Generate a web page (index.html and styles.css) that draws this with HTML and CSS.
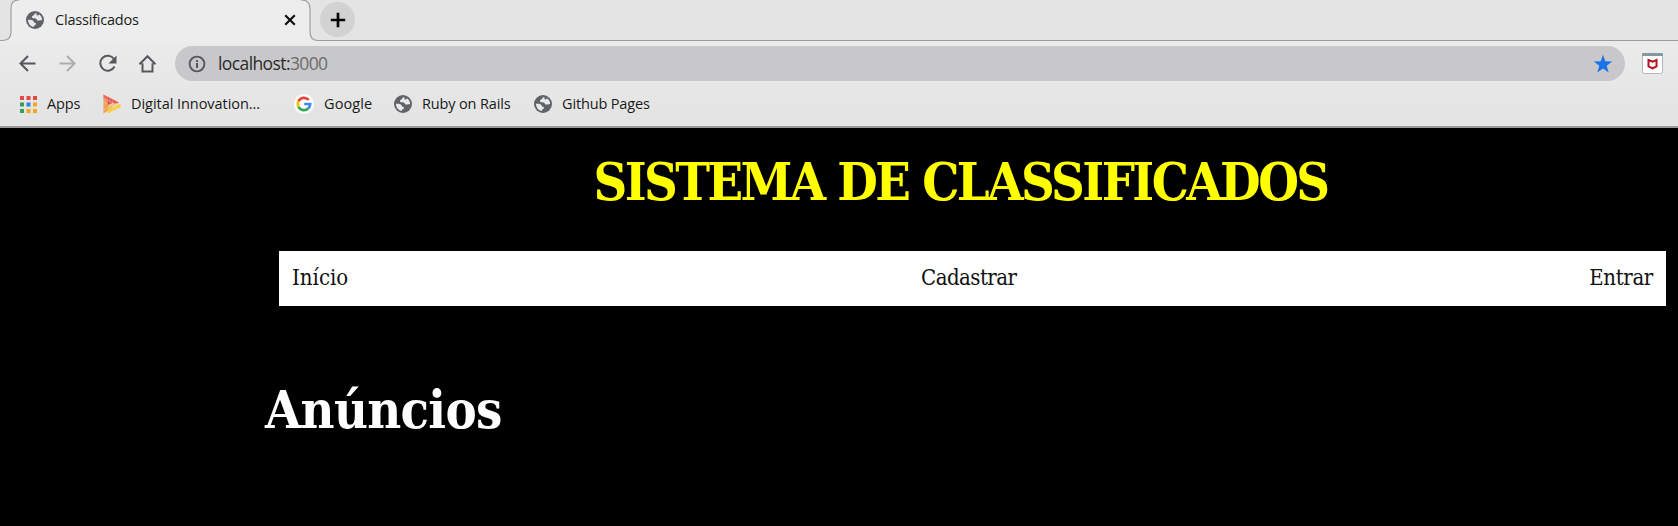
FILE: index.html
```html
<!DOCTYPE html>
<html lang="pt-BR">
<head>
<meta charset="utf-8">
<title>Classificados</title>
<link rel="stylesheet" href="styles.css">
</head>
<body>
<svg class="defs" width="0" height="0" aria-hidden="true">
  <symbol id="globe" viewBox="0 0 18 18">
    <circle cx="9" cy="9" r="9" fill="#5f6368"/>
    <path d="M10.2 1.900C7.900 2.300 8.800 4 7.200 4.400 5.800 4.800 5.700 6 6.500 7c.9 1 3.900-.1 4.400 1.700.3 1.200 1.700.9 2.700.7 1-.2 1.800.1 2.500-.4A7.100 7.100 0 0 0 13 3.200c-.4 1-1.300 1.500-2.100 1.100-.9-.5-.1-1.500-.7-2.400zM1.900 8.800c1.700-.3 3.900-.2 5 .8 1 .9.7 2 1.900 2.200 1.300.2 1.600 1 .9 1.800-.8.800-1.800.8-2 2.300A7.100 7.100 0 0 1 1.900 8.800z" fill="#e9e9e9"/>
  </symbol>
</svg>
<header class="chrome">
  <div class="tabs">
    <div class="tab">
      <svg class="outline" width="320" height="42" viewBox="0 0 320 42"><path class="fill" d="M0 42V40.500h3Q11 40 11 32V8Q11 0 19 0H301Q310 0 310 9V32Q310 40.500 318 40.500h2V42z"/><path class="line" d="M0 40.500h3Q11 40 11 32V8Q11 0 19 0M301 0Q310 0 310 9V32Q310 40.500 318 40.500h2"/></svg>
      <svg class="globe"><use href="#globe"/></svg>
      <span class="tab-title">Classificados</span>
      <svg class="close" width="12" height="12" viewBox="0 0 12 12"><path d="M1.200 1.200l9.600 9.600m0-9.600l-9.600 9.600"/></svg>
    </div>
    <div class="new-tab"><svg width="16" height="16" viewBox="0 0 16 16"><path d="M8 .8v14.400M.8 8h14.400"/></svg></div>
  </div>
  <div class="toolbar">
    <svg class="nav-icons" width="175" height="36" viewBox="0 0 175 36">
      <g class="stroke"><path d="M35.500 17.500H21M28 10L20.500 17.500l7.500 7.500"/><path class="dim" d="M59.500 17.500h15M67 10l7.500 7.500-7.500 7.500"/><path d="M114 13a7.500 7.500 0 1 0 .5 7.500"/><path d="M142.500 17.300V25.500h10V17.300M139.500 18.200l8-8 8 8"/></g>
      <path d="M116.500 9.500v8h-8z" fill="#55585c"/>
    </svg>
    <div class="address">
      <svg width="18" height="18" viewBox="0 0 18 18"><circle cx="9" cy="9" r="7.400" fill="none" stroke="#55585c" stroke-width="1.900"/><path d="M8 8h2v5H8zM8 5h2v2H8z" fill="#55585c"/></svg>
      <span class="url">localhost:<span>3000</span></span>
      <svg class="star" width="20" height="20" viewBox="0 0 20 20"><path d="M10 .8l2.300 6.500 6.900.2-5.500 4.200 2 6.700-5.700-3.900-5.700 3.900 2-6.700L.8 7.500l6.900-.2z" fill="#1a73e8"/></svg>
    </div>
    <svg class="shield" width="21" height="21" viewBox="0 0 21 21"><rect x=".5" y=".5" width="20" height="20" rx="2" fill="#fff" stroke="#aeb7bb"/><path d="M0 3V1q0-1 1-1h19q1 0 1 1v2z" fill="#81999f"/><path d="M6.500 7l4 1.700 4-1.700v6.500l-4 2-4-2z" fill="none" stroke="#b01622" stroke-width="2"/></svg>
  </div>
  <div class="bookmarks">
    <div class="mark apps"><svg width="17" height="17" viewBox="0 0 17 17"><path d="M0 0h4v4H0zM6.500 0h4v4h-4zM13 0h4v4h-4z" fill="#e24a42"/><path d="M0 6.500h4v4H0zM0 13h4v4H0z" fill="#3b9b59"/><path d="M6.500 6.500h4v4h-4z" fill="#2e86e8"/><path d="M13 6.500h4v4h-4zM6.500 13h4v4h-4zM13 13h4v4h-4z" fill="#f2a81d"/></svg><span>Apps</span></div>
    <div class="mark digital"><svg width="18" height="20" viewBox="0 0 18 20"><path d="M.5 3.500l5 3v10l-5 3z" fill="#ed963f"/><path d="M.5 .5L16 8.500 12.500 10.500.5 4.500z" fill="#e65347"/><path d="M4.500 6.300l5 2.600-5 2.700z" fill="#dd3f43"/><path d="M17.500 9.500v3.700L4.500 19.500v-4z" fill="#f7cd38"/><path d="M5.500 11l8.500-1.500-9 6.800v-3z" fill="#f3b83a"/><path d="M2 0v20M4.200 0v20M7 2v16M10 4v13M13 6v10M0 4l17 8M0 8l15 7M0 16l17-8" stroke="#f0e4d2" stroke-width=".35"/></svg><span>Digital Innovation...</span></div>
    <div class="mark google"><svg width="20" height="20" viewBox="0 0 20 20"><circle cx="10" cy="10" r="10" fill="#fff"/><g fill="none" stroke-width="2.700"><path d="M14.700 5.900A6.200 6.200 0 0 0 4.500 7.200" stroke="#ea4335"/><path d="M4.500 7.200a6.200 6.200 0 0 0 0 5.600" stroke="#fbbc05"/><path d="M4.500 12.800a6.200 6.200 0 0 0 9.700 1.800" stroke="#34a853"/><path d="M10.200 10h6a6.200 6.200 0 0 1-2 4.600" stroke="#4285f4"/></g></svg><span>Google</span></div>
    <div class="mark ruby"><svg class="globe"><use href="#globe"/></svg><span>Ruby on Rails</span></div>
    <div class="mark github"><svg class="globe"><use href="#globe"/></svg><span>Github Pages</span></div>
  </div>
</header>
<main class="page">
  <h1 class="title">SISTEMA DE CLASSIFICADOS</h1>
  <nav class="menu"><a class="start">Início</a><a class="register">Cadastrar</a><a class="enter">Entrar</a></nav>
  <h2 class="ads">Anúncios</h2>
</main>
</body>
</html>
```
FILE: styles.css
```css
* { box-sizing: border-box; }
body { margin: 0; height: 526px; overflow: hidden; background: #000; font-family: "Open Sans", "Noto Sans", sans-serif; }
svg { flex: none; display: block; }
.defs { position: absolute; }
.globe { width: 18px; height: 18px; }
.chrome { height: 128px; border-bottom: 2px solid #999; background: linear-gradient(#ebebeb 41px, #e3e3e3); color: #1a1a1a; }
.tabs { display: flex; height: 41px; background: #e4e4e4; border-bottom: 1px solid #9b9b9b; }
.tab { position: relative; width: 320px; height: 41px; display: flex; align-items: center; padding: 0 24px 2px 26px; }
.outline { position: absolute; left: 0; top: 0; }
.outline .fill { fill: #ededed; }
.outline .line { fill: none; stroke: #a0a0a0; stroke-width: 1.2; }
.tab .globe, .tab-title, .close { position: relative; }
.tab-title { margin-left: 11px; font-size: 14.5px; letter-spacing: -.2px; }
.close { margin-left: auto; fill: none; stroke: #111; stroke-width: 2.2; }
.new-tab { display: flex; align-items: center; justify-content: center; width: 35px; height: 35px; margin-top: 2px; border-radius: 50%; background: #d2d2d2; }
.new-tab svg { stroke: #080808; stroke-width: 2.7; }
.toolbar { display: flex; height: 45px; padding-top: 5px; }
.stroke { fill: none; stroke: #55585c; stroke-width: 2; }
.stroke .dim { stroke: #adadad; }
.address { display: flex; align-items: center; width: 1450px; height: 35px; padding: 0 12px 0 13px; border-radius: 18px; background: #c8c8ca; }
.url { margin: -1px 0 0 12px; font-size: 17.5px; color: #2b2b2b; letter-spacing: -.6px; }
.url span { color: #6c6c6c; }
.star { margin-left: auto; }
.shield { margin: 7px 0 0 17px; }
.bookmarks { display: flex; height: 36px; align-items: center; }
.mark { display: flex; align-items: center; font-size: 14.5px; white-space: nowrap; letter-spacing: -.15px; }
.mark span { margin: -2px 0 0 10px; }
.apps { width: 83px; margin-left: 20px; }
.digital { width: 191px; letter-spacing: -.05px; }
.google { width: 100px; letter-spacing: .1px; }
.ruby { width: 140px; }
.page { padding-left: 265px; font-family: "DejaVu Serif", serif; font-stretch: condensed; }
.title { height: 123px; margin: 0 22px 0 0; padding: 21px 0 0; color: #ff0; font-size: 52px; line-height: 66px; font-weight: 700; text-align: center; letter-spacing: -2.55px; white-space: nowrap; }
.menu { display: flex; align-items: center; justify-content: space-between; width: 1387px; height: 55px; margin-left: 14px; padding: 0 13px 3px; background: #fff; color: #111; font-size: 22px; letter-spacing: -.35px; }
.start { letter-spacing: 0; }
.register { letter-spacing: -.55px; }
.ads { margin: 71px 0 0; color: #fff; font-size: 52px; line-height: 66px; font-weight: 700; letter-spacing: -.7px; }
```
